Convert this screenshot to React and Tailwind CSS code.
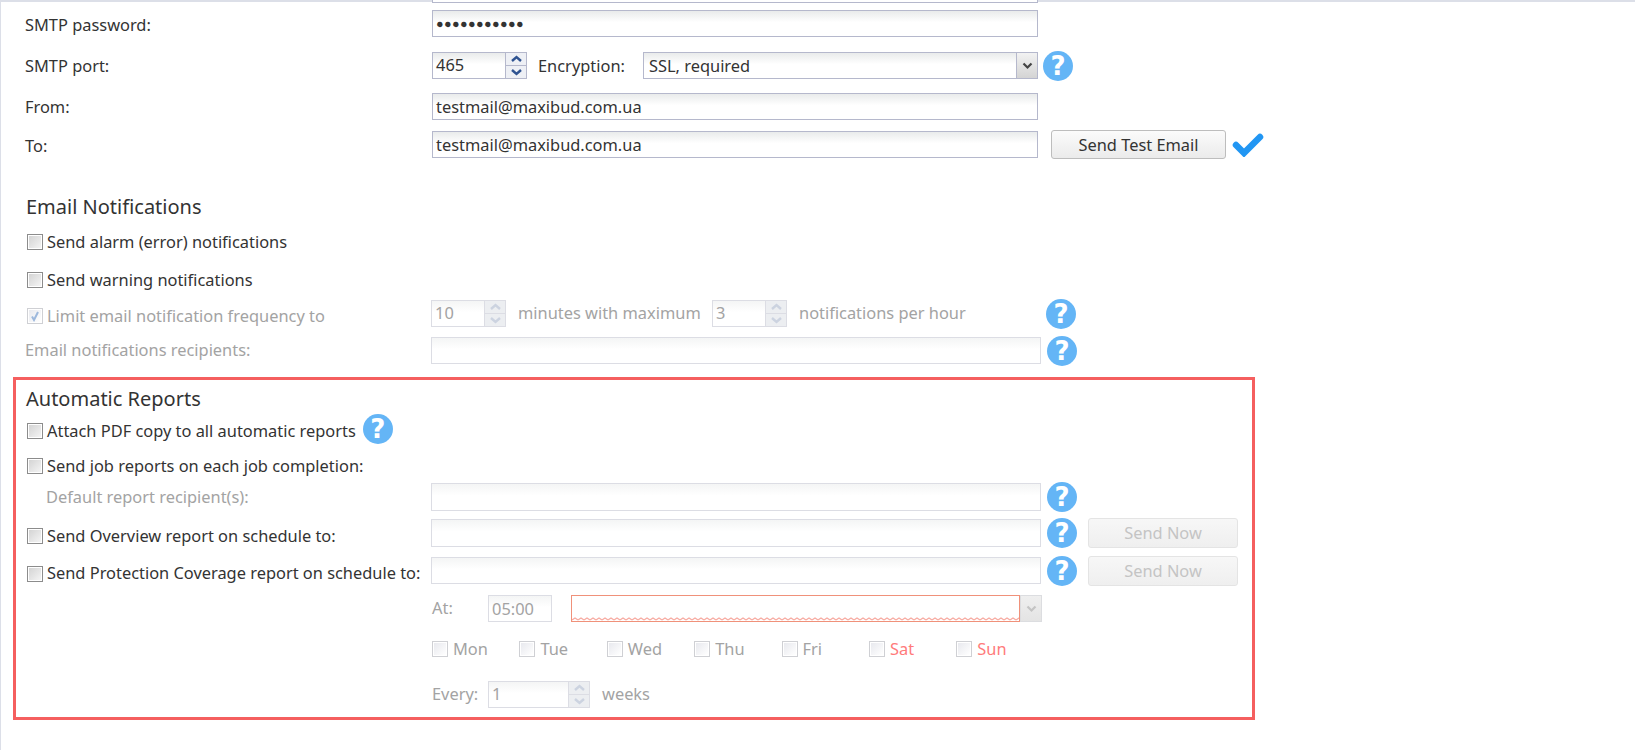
const DAYS = [
  { name: 'Mon' },
  { name: 'Tue' },
  { name: 'Wed' },
  { name: 'Thu' },
  { name: 'Fri' },
  { name: 'Sat', weekend: true },
  { name: 'Sun', weekend: true },
]

function Help() {
  return (
    <span className="flex items-center justify-center w-[30px] h-[30px] shrink-0 rounded-full bg-[#64b5f6] text-white text-[26px] font-bold leading-none font-['DejaVu_Sans',sans-serif]">
      ?
    </span>
  )
}

function Check({ checked, disabled }) {
  return (
    <span className={`flex items-center justify-center w-[16px] h-[16px] shrink-0 border p-[1px] ${disabled ? 'border-[#cfd0d4]' : 'border-[#8c8c8c]'}`}>
      <span className={`flex items-center justify-center w-full h-full ${disabled ? 'bg-linear-to-br from-[#e8e9ee] to-white' : 'bg-linear-to-br from-[#d4d4d4] to-[#f4f4f4]'}`}>
        {checked && (
          <svg width="12" height="12" viewBox="0 0 12 12">
            <path d="M3 6.5 L5 10 L9 2" fill="none" stroke="#9db8dc" strokeWidth="2" />
          </svg>
        )}
      </span>
    </span>
  )
}

function Input({ value, width, disabled, children }) {
  return (
    <div className={`flex items-center h-full px-[3px] pt-[1px] border bg-linear-to-b to-white to-[45%] ${width} ${disabled ? 'border-[#dcdde4] from-[#f4f5f5] text-[#a3a3a3]' : 'border-[#b5b8cc] from-[#e9ebeb] text-[#333]'}`}>
      {value}
      {children}
    </div>
  )
}

function Spinner({ value, width, disabled }) {
  const arrow = disabled ? '#ccd3e0' : '#2f5391'
  return (
    <div className={`flex h-full border ${width} ${disabled ? 'border-[#dcdde4] text-[#a3a3a3]' : 'border-[#b5b8cc] text-[#333]'}`}>
      <div className={`flex-1 flex items-center px-[3px] bg-linear-to-b to-white to-[45%] ${disabled ? 'from-[#f4f5f5]' : 'from-[#e9ebeb]'}`}>{value}</div>
      <div className={`flex flex-col w-[21px] border-l ${disabled ? 'border-[#dcdde4] bg-[#eceef1]' : 'border-[#b5b8cc] bg-[#eef0f5]'}`}>
        <div className={`flex-1 flex items-center justify-center border-b ${disabled ? 'border-[#dcdde4]' : 'border-[#b5b8cc]'}`}>
          <svg width="13" height="8" viewBox="0 0 13 8"><path d="M2 6 L6.5 2 L11 6" fill="none" stroke={arrow} strokeWidth="2.4" /></svg>
        </div>
        <div className="flex-1 flex items-center justify-center">
          <svg width="13" height="8" viewBox="0 0 13 8"><path d="M2 2 L6.5 6 L11 2" fill="none" stroke={arrow} strokeWidth="2.4" /></svg>
        </div>
      </div>
    </div>
  )
}

function SelectArrow({ disabled }) {
  return (
    <div className={`flex items-center justify-center w-[21px] h-full border-l bg-linear-to-b ${disabled ? 'border-[#dcdde0] from-[#efefef] to-[#e4e4e4]' : 'border-[#b5b8cc] from-[#f2f2f2] to-[#d4d4d4]'}`}>
      <svg width="11" height="8" viewBox="0 0 11 8"><path d="M1.5 1.5 L5.5 5.5 L9.5 1.5" fill="none" stroke={disabled ? '#c4c4c4' : '#444'} strokeWidth="2.2" /></svg>
    </div>
  )
}

function Label({ children, muted, className = '' }) {
  return <div className={`whitespace-nowrap ${muted ? 'text-[#a3a3a3]' : 'text-[#333]'} ${className}`}>{children}</div>
}

function CheckLabel({ children, checked, disabled, width = 'w-[408px]', className = '' }) {
  return (
    <div className={`flex items-center gap-[4px] pl-[2px] shrink-0 ${width} ${disabled ? 'text-[#a3a3a3]' : 'text-[#333]'} ${className}`}>
      <Check checked={checked} disabled={disabled} />
      <span className="whitespace-nowrap">{children}</span>
    </div>
  )
}

function SendNow() {
  return (
    <button className="w-[150px] h-[30px] ml-[11px] pt-[1px] rounded-[3px] border border-[#e4e4e4] bg-linear-to-b from-[#f7f7f7] to-[#efefef] text-[#c4c4c4]">
      Send Now
    </button>
  )
}

export default function App() {
  return (
    <div className="w-[1635px] h-[750px] overflow-hidden bg-white border-l border-[#dcdfe8] font-['Noto_Sans',sans-serif] text-[16.4px]">
      <div className="flex h-[3px]">
        <div className="w-[431px] border-t-2 border-[#dcdfe8]" />
        <div className="w-[606px] border-x border-b border-[#b5b8cc]" />
        <div className="flex-1 border-t-2 border-[#dcdfe8]" />
      </div>

      <div className="pl-[24px]">
        <div className="flex items-center h-[27px] mt-[7px]">
          <Label className="w-[407px] pt-[3px]">SMTP password:</Label>
          <Input width="w-[606px]" value={<span className="tracking-[0.4px] text-[12.6px]">●●●●●●●●●●●</span>} />
        </div>

        <div className="flex items-center h-[27px] mt-[15px]">
          <Label className="w-[407px] pt-[1px]">SMTP port:</Label>
          <Spinner width="w-[95px]" value="465" />
          <Label className="w-[116px] pl-[11px] pt-[1px]">Encryption:</Label>
          <div className="flex w-[395px] h-full border border-[#b5b8cc]">
            <div className="flex-1 flex items-center px-[5px] pt-[1px] text-[#333] bg-linear-to-b from-[#e9ebeb] to-white to-[45%]">SSL, required</div>
            <SelectArrow />
          </div>
          <div className="ml-[5px]"><Help /></div>
        </div>

        <div className="flex items-center h-[27px] mt-[14px]">
          <Label className="w-[407px] pt-[2px]">From:</Label>
          <Input width="w-[606px]" value="testmail@maxibud.com.ua" />
        </div>

        <div className="flex items-center h-[27px] mt-[11px]">
          <Label className="w-[407px] pt-[3px]">To:</Label>
          <Input width="w-[606px]" value="testmail@maxibud.com.ua" />
          <button className="w-[175px] h-[29px] ml-[13px] pt-[1px] rounded-[3px] border border-[#bdbdbd] bg-linear-to-b from-[#fbfbfb] to-[#ebebeb] text-[#333]">
            Send Test Email
          </button>
          <svg className="ml-[6px]" width="32" height="24" viewBox="0 0 32 24">
            <path d="M4 12 L12 20 L28 4" fill="none" stroke="#2196f3" strokeWidth="6.5" strokeLinejoin="miter" strokeLinecap="round" />
          </svg>
        </div>

        <div className="h-[28px] mt-[35px] pl-[1px] text-[20px] leading-[28px] text-[#333]">Email Notifications</div>

        <div className="flex items-center h-[24px] mt-[9px]"><CheckLabel>Send alarm (error) notifications</CheckLabel></div>
        <div className="flex items-center h-[24px] mt-[14px]"><CheckLabel>Send warning notifications</CheckLabel></div>

        <div className="flex items-center h-[27px] mt-[8px]">
          <CheckLabel checked disabled width="w-[406px]" className="pt-[5px]">Limit email notification frequency to</CheckLabel>
          <Spinner disabled width="w-[75px]" value="10" />
          <Label muted className="w-[206px] pl-[12px]">minutes with maximum</Label>
          <Spinner disabled width="w-[75px]" value="3" />
          <Label muted className="w-[259px] pl-[12px]">notifications per hour</Label>
          <Help />
        </div>

        <div className="flex items-center h-[27px] mt-[10px]">
          <Label muted className="w-[406px]">Email notifications recipients:</Label>
          <Input disabled width="w-[610px]" />
          <div className="ml-[6px]"><Help /></div>
        </div>

        <div className="w-[1242px] h-[343px] mt-[13px] -ml-[12px] pl-[9px] border-[3px] border-[#f55f5f]">
          <div className="h-[28px] mt-[5px] pl-[1px] text-[20px] leading-[28px] text-[#333]">Automatic Reports</div>

          <div className="flex items-center h-[30px] mt-[1px]">
            <CheckLabel width="w-auto" className="pt-[4px]">Attach PDF copy to all automatic reports</CheckLabel>
            <div className="ml-[7px]"><Help /></div>
          </div>

          <div className="flex items-center h-[24px] mt-[10px]"><CheckLabel>Send job reports on each job completion:</CheckLabel></div>

          <div className="flex items-center h-[28px] mt-[5px]">
            <Label muted className="w-[406px] pl-[21px]">Default report recipient(s):</Label>
            <Input disabled width="w-[610px]" />
            <div className="ml-[6px]"><Help /></div>
          </div>

          <div className="flex items-center h-[28px] mt-[8px]">
            <CheckLabel width="w-[406px]" className="pt-[6px]">Send Overview report on schedule to:</CheckLabel>
            <Input disabled width="w-[610px]" />
            <div className="ml-[6px]"><Help /></div>
            <SendNow />
          </div>

          <div className="flex items-center h-[27px] mt-[10px]">
            <CheckLabel width="w-[406px]" className="pt-[6px]">Send Protection Coverage report on schedule to:</CheckLabel>
            <Input disabled width="w-[610px]" />
            <div className="ml-[6px]"><Help /></div>
            <SendNow />
          </div>

          <div className="flex items-center h-[27px] mt-[11px] pl-[407px]">
            <Label muted className="w-[56px]">At:</Label>
            <Input disabled width="w-[64px]" value="05:00" />
            <div className="relative flex w-[471px] h-full ml-[19px]">
              <div className="relative flex-1 bg-white border border-[#f0917a]">
                <svg className="absolute left-0 right-0 bottom-0 w-full h-[4px]">
                  <pattern id="wave" width="6" height="4" patternUnits="userSpaceOnUse">
                    <path d="M0 3 L3 1 L6 3" fill="none" stroke="#f7a9a0" strokeWidth="1.2" />
                  </pattern>
                  <rect width="100%" height="4" fill="url(#wave)" />
                </svg>
              </div>
              <div className="border-y border-r border-[#dcdde0]"><SelectArrow disabled /></div>
            </div>
          </div>

          <div className="flex items-center h-[24px] mt-[15px] pl-[407px]">
            {DAYS.map((d) => (
              <div key={d.name} className="flex items-center gap-[5px] w-[87.4px]">
                <Check disabled />
                <span className={d.weekend ? 'text-[#ff7b7b]' : 'text-[#a3a3a3]'}>{d.name}</span>
              </div>
            ))}
          </div>

          <div className="flex items-center h-[27px] mt-[20px] pl-[407px]">
            <Label muted className="w-[56px]">Every:</Label>
            <Spinner disabled width="w-[102px]" value="1" />
            <Label muted className="pl-[12px]">weeks</Label>
          </div>
        </div>
      </div>
    </div>
  )
}
